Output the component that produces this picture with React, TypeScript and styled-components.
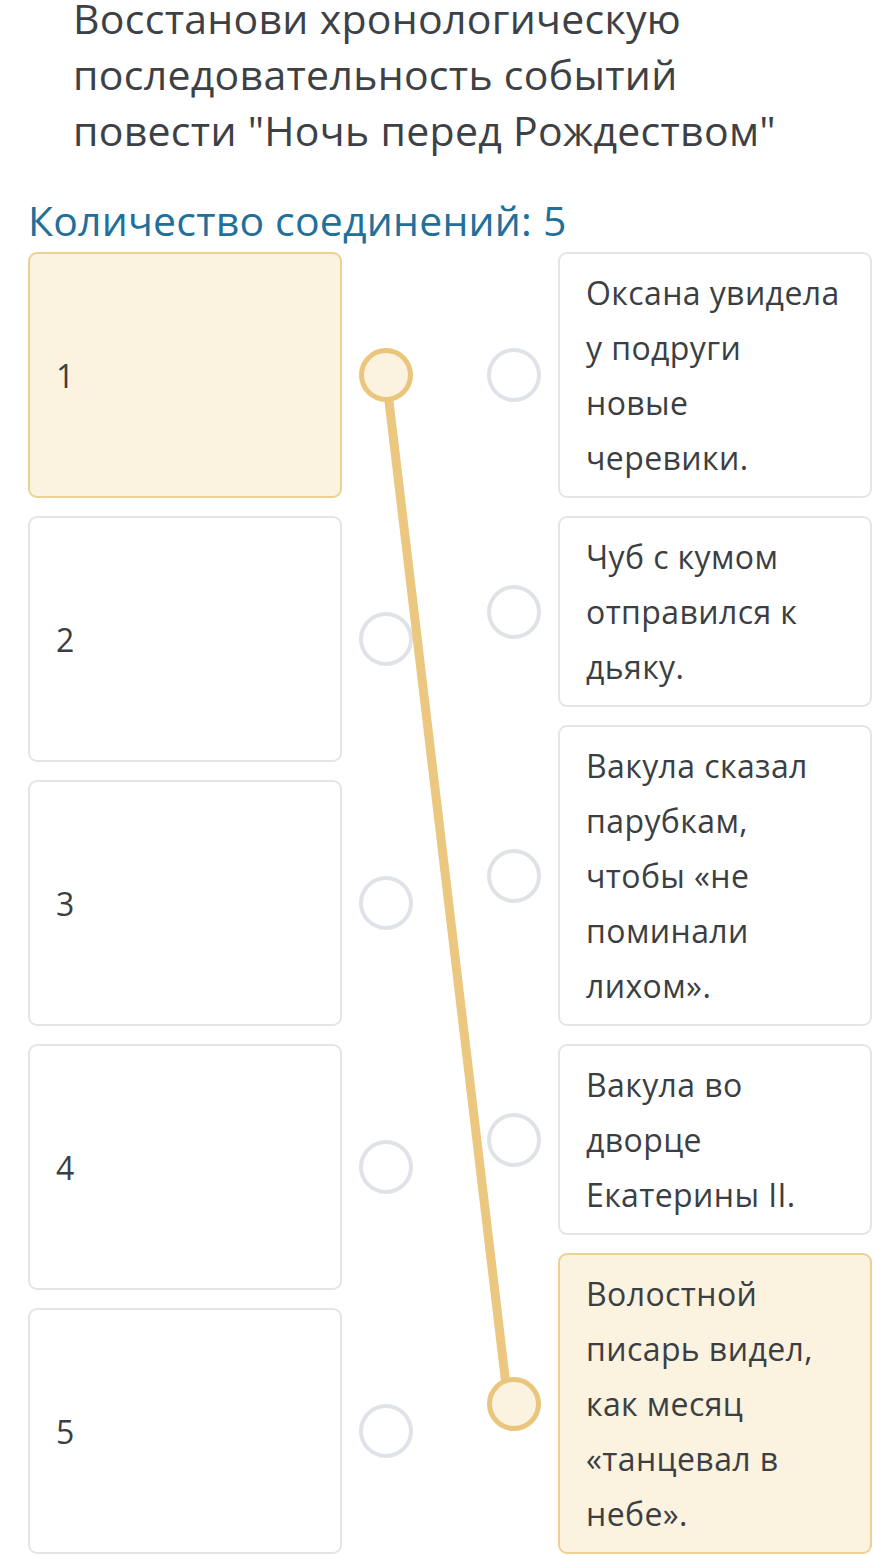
import React from "react";
import styled, { createGlobalStyle } from "styled-components";

const Global = createGlobalStyle`
  html, body { margin: 0; padding: 0; background: #ffffff; }
  body { font-family: "Open Sans", "Noto Sans", sans-serif; color: #3b3f43; }
  * { box-sizing: border-box; }
`;

const Page = styled.div`
  width: 875px;
  overflow: hidden;
`;

const Title = styled.h1`
  margin: -10px 0 0 0;
  padding: 0 20px 0 73px;
  font-size: 41px;
  line-height: 56px;
  letter-spacing: 0.3px;
  font-weight: 400;
  color: #3d4145;
  white-space: nowrap;
`;

const Count = styled.h2`
  margin: 40px 0 10px 0;
  padding-left: 28px;
  font-size: 41px;
  line-height: 44px;
  letter-spacing: 0.2px;
  font-weight: 400;
  color: #22709a;
`;

const Board = styled.div`
  position: relative;
  display: grid;
  grid-template-columns: 385px 385px;
  column-gap: 74px;
  padding-left: 28px;
`;

const Column = styled.div`
  display: flex;
  flex-direction: column;
  gap: 18px;
`;

const Row = styled.div<{ $grow?: boolean }>`
  display: flex;
  align-items: center;
  gap: 17px;
  flex: ${(p) => (p.$grow ? "1 1 0" : "0 0 auto")};
`;

const Card = styled.div<{ $active?: boolean; $fill?: boolean }>`
  width: 314px;
  flex: 0 0 314px;
  align-self: stretch;
  border: 2px solid ${(p) => (p.$active ? "#ecd195" : "#e3e5e8")};
  background: ${(p) => (p.$active ? "#fbf2df" : "#ffffff")};
  border-radius: 9px;
  font-size: 32px;
  line-height: 55px;
  letter-spacing: 0.4px;
  color: #3b3f43;
  white-space: nowrap;
  display: flex;
  align-items: center;
  padding: ${(p) => (p.$fill ? "0 20px 0 26px" : "11px 16px 11px 26px")};
`;

const Dot = styled.div<{ $active?: boolean }>`
  width: 54px;
  height: 54px;
  flex: 0 0 54px;
  border-radius: 50%;
  border: ${(p) => (p.$active ? "5px solid #eac57c" : "4px solid #dfe3e7")};
  background: ${(p) => (p.$active ? "#fbf2df" : "#ffffff")};
  position: relative;
  z-index: ${(p) => (p.$active ? 2 : 0)};
`;

const Wire = styled.svg`
  position: absolute;
  left: 0;
  top: 0;
  width: 875px;
  height: 100%;
  pointer-events: none;
  z-index: 1;
  overflow: visible;
`;

const lefts = ["1", "2", "3", "4", "5"];
const rights: string[][] = [
  ["Оксана увидела", "у подруги", "новые", "черевики."],
  ["Чуб с кумом", "отправился к", "дьяку."],
  ["Вакула сказал", "парубкам,", "чтобы «не", "поминали", "лихом»."],
  ["Вакула во", "дворце", "Екатерины II."],
  ["Волостной", "писарь видел,", "как месяц", "«танцевал в", "небе»."],
];

export default function App() {
  return (
    <Page>
      <Global />
      <Title>
        Восстанови хронологическую
        <br />
        последовательность событий
        <br />
        повести "Ночь перед Рождеством"
      </Title>
      <Count>Количество соединений: 5</Count>
      <Board>
        <Column>
          {lefts.map((n, i) => (
            <Row key={n} $grow>
              <Card $active={i === 0} $fill>
                {n}
              </Card>
              <Dot $active={i === 0} />
            </Row>
          ))}
        </Column>
        <Column>
          {rights.map((lines, i) => (
            <Row key={i}>
              <Dot $active={i === 4} />
              <Card $active={i === 4}>
                <div>
                  {lines.map((l, j) => (
                    <React.Fragment key={j}>
                      {j > 0 && <br />}
                      {l}
                    </React.Fragment>
                  ))}
                </div>
              </Card>
            </Row>
          ))}
        </Column>
        <Wire>
          <line x1={386} y1={124} x2={508} y2={1150} stroke="#ecc77f" strokeWidth={9} strokeLinecap="round" />
        </Wire>
      </Board>
    </Page>
  );
}
